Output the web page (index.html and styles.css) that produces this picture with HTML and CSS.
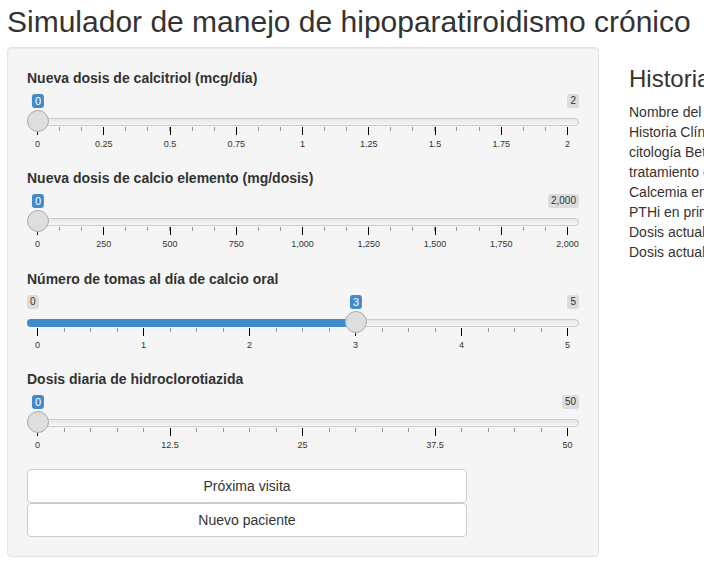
FILE: index.html
```html
<!DOCTYPE html>
<html lang="es">
<head>
<meta charset="utf-8">
<title>Simulador de manejo de hipoparatiroidismo crónico</title>
<link rel="stylesheet" href="styles.css">
</head>
<body>
<div class="page">
  <h2 class="title">Simulador de manejo de hipoparatiroidismo crónico</h2>
  <div class="layout">
    <div class="sidebar">
      <div class="form-group">
        <label class="control-label">Nueva dosis de calcitriol (mcg/día)</label>
        <div class="irs" style="--p: 0">
          <div class="irs-labels">
            <span class="irs-min is-hidden">0</span>
            <span class="irs-max">2</span>
            <span class="irs-single">0</span>
          </div>
          <div class="irs-track">
            <div class="irs-line"></div>
            <div class="irs-handle"></div>
          </div>
          <div class="irs-grid">
            <div class="irs-ticks">
              <div class="irs-pols small"><span></span><span></span><span></span><span></span><span></span><span></span><span></span><span></span><span></span><span></span><span></span><span></span><span></span><span></span><span></span><span></span><span></span><span></span><span></span><span></span><span></span><span></span><span></span><span></span><span></span></div>
              <div class="irs-pols"><span></span><span></span><span></span><span></span><span></span><span></span><span></span><span></span><span></span></div>
            </div>
            <div class="irs-grid-text"><span>0</span><span>0.25</span><span>0.5</span><span>0.75</span><span>1</span><span>1.25</span><span>1.5</span><span>1.75</span><span>2</span></div>
          </div>
        </div>
      </div>

      <div class="form-group">
        <label class="control-label">Nueva dosis de calcio elemento (mg/dosis)</label>
        <div class="irs" style="--p: 0">
          <div class="irs-labels">
            <span class="irs-min is-hidden">0</span>
            <span class="irs-max">2,000</span>
            <span class="irs-single">0</span>
          </div>
          <div class="irs-track">
            <div class="irs-line"></div>
            <div class="irs-handle"></div>
          </div>
          <div class="irs-grid">
            <div class="irs-ticks">
              <div class="irs-pols small"><span></span><span></span><span></span><span></span><span></span><span></span><span></span><span></span><span></span><span></span><span></span><span></span><span></span><span></span><span></span><span></span><span></span><span></span><span></span><span></span><span></span><span></span><span></span><span></span><span></span></div>
              <div class="irs-pols"><span></span><span></span><span></span><span></span><span></span><span></span><span></span><span></span><span></span></div>
            </div>
            <div class="irs-grid-text"><span>0</span><span>250</span><span>500</span><span>750</span><span>1,000</span><span>1,250</span><span>1,500</span><span>1,750</span><span>2,000</span></div>
          </div>
        </div>
      </div>

      <div class="form-group">
        <label class="control-label">Número de tomas al día de calcio oral</label>
        <div class="irs" style="--p: 0.6">
          <div class="irs-labels">
            <span class="irs-min">0</span>
            <span class="irs-max">5</span>
            <span class="irs-single">3</span>
          </div>
          <div class="irs-track">
            <div class="irs-line"></div>
            <div class="irs-bar"></div>
            <div class="irs-handle"></div>
          </div>
          <div class="irs-grid">
            <div class="irs-ticks">
              <div class="irs-pols small"><span></span><span></span><span></span><span></span><span></span><span></span><span></span><span></span><span></span><span></span><span></span><span></span><span></span><span></span><span></span><span></span><span></span><span></span><span></span><span></span><span></span></div>
              <div class="irs-pols"><span></span><span></span><span></span><span></span><span></span><span></span></div>
            </div>
            <div class="irs-grid-text"><span>0</span><span>1</span><span>2</span><span>3</span><span>4</span><span>5</span></div>
          </div>
        </div>
      </div>

      <div class="form-group">
        <label class="control-label">Dosis diaria de hidroclorotiazida</label>
        <div class="irs" style="--p: 0">
          <div class="irs-labels">
            <span class="irs-min is-hidden">0</span>
            <span class="irs-max">50</span>
            <span class="irs-single">0</span>
          </div>
          <div class="irs-track">
            <div class="irs-line"></div>
            <div class="irs-handle"></div>
          </div>
          <div class="irs-grid">
            <div class="irs-ticks">
              <div class="irs-pols small"><span></span><span></span><span></span><span></span><span></span><span></span><span></span><span></span><span></span><span></span><span></span><span></span><span></span><span></span><span></span><span></span><span></span><span></span><span></span><span></span><span></span></div>
              <div class="irs-pols"><span></span><span></span><span></span><span></span><span></span></div>
            </div>
            <div class="irs-grid-text"><span>0</span><span>12.5</span><span>25</span><span>37.5</span><span>50</span></div>
          </div>
        </div>
      </div>

      <div class="actions">
        <button class="btn" type="button">Próxima visita</button>
        <button class="btn" type="button">Nuevo paciente</button>
      </div>
    </div>

    <div class="main">
      <h3 class="section-title">Historia clínica</h3>
      <p class="history">
        <span>Nombre del paciente: María José Fernández</span>
        <span>Historia Clínica: mujer de 52 años con tiroidectomía total por</span>
        <span>citología Bethesda VI. Hipoparatiroidismo postquirúrgico en</span>
        <span>tratamiento con calcitriol y carbonato cálcico.</span>
        <span>Calcemia en la visita actual: 7.2 mg/dL</span>
        <span>PTHi en primera visita: 8 pg/mL</span>
        <span>Dosis actual de calcitriol: 0 mcg/día</span>
        <span>Dosis actual de calcio elemento: 0 mg/día</span>
      </p>
    </div>
  </div>
</div>
</body>
</html>
```

FILE: styles.css
```css
* {
  box-sizing: border-box;
}

html,
body {
  margin: 0;
  padding: 0;
}

body {
  width: 704px;
  height: 563px;
  overflow: hidden;
  font-family: "Liberation Sans", Arial, Helvetica, sans-serif;
  font-size: 14px;
  line-height: 1.42857143;
  color: #333;
  background: #fff;
}

.page {
  padding-left: 7px;
}

.title {
  margin: 5px 0 9px 0;
  font-size: 30px;
  font-weight: 500;
  line-height: 1.1;
  white-space: nowrap;
}

.layout {
  display: flex;
  align-items: flex-start;
}

.sidebar {
  flex: 0 0 592px;
  padding: 20px 19px 19px;
  background: #f5f5f5;
  border: 1px solid #e3e3e3;
  border-radius: 4px;
  box-shadow: inset 0 1px 1px rgba(0, 0, 0, 0.05);
}

.form-group {
  margin-bottom: 15.3px;
}

.control-label {
  display: inline-block;
  margin-bottom: 5px;
  font-weight: bold;
}

/* ---- range slider ---- */
.irs {
  padding-bottom: 4px;
}

.irs-labels {
  position: relative;
  height: 17px;
  padding-top: 1px;
  display: flex;
  justify-content: space-between;
  align-items: flex-start;
}

.irs-min,
.irs-max {
  padding: 1px 3px;
  font-size: 10px;
  line-height: 12px;
  color: #333;
  background: rgba(0, 0, 0, 0.1);
  border-radius: 3px;
}

.is-hidden {
  visibility: hidden;
}

.irs-single {
  position: absolute;
  top: 1px;
  left: calc(var(--p) * (100% - 22px) + 11px);
  transform: translateX(-50%);
  padding: 1px 3px;
  font-size: 11px;
  line-height: 12px;
  color: #fff;
  background: #428bca;
  border-radius: 3px;
}

.irs-track {
  position: relative;
  height: 17px;
  padding-top: 8px;
}

.irs-line {
  height: 8px;
  background: linear-gradient(to bottom, #dedede -50%, #fff 150%);
  background-color: #ededed;
  border: 1px solid #ccc;
  border-radius: 8px;
}

.irs-bar {
  position: absolute;
  top: 8px;
  left: 0;
  height: 8px;
  width: calc(var(--p) * (100% - 22px) + 11px);
  background: #428bca;
  border-radius: 8px 0 0 8px;
}

.irs-handle {
  position: absolute;
  top: 0;
  left: calc(var(--p) * (100% - 22px));
  width: 22px;
  height: 22px;
  background: #dedede;
  border: 1px solid #ababab;
  border-radius: 50%;
  box-shadow: 1px 1px 3px rgba(255, 255, 255, 0.3);
}

.irs-grid {
  padding: 0 11px 0 10px;
}

.irs-ticks {
  display: grid;
  height: 8px;
}

.irs-pols {
  grid-area: 1 / 1;
  display: flex;
  justify-content: space-between;
  align-items: flex-start;
}

.irs-pols span {
  width: 1px;
  height: 8px;
  background: #000;
}

.irs-pols.small span {
  height: 4px;
  background: #999;
}

.irs-grid-text {
  margin-top: 5px;
  height: 9px;
  display: flex;
  justify-content: space-between;
}

.irs-grid-text span {
  width: 1px;
  display: flex;
  justify-content: center;
  white-space: nowrap;
  font-size: 9px;
  line-height: 9px;
  color: #333;
}

/* ---- buttons ---- */
.actions {
  margin-top: 1.5px;
}

.btn {
  display: block;
  width: 440px;
  padding: 6px 12px;
  font-family: inherit;
  font-size: 14px;
  line-height: 1.42857143;
  color: #333;
  text-align: center;
  background: #fff;
  border: 1px solid #ccc;
  border-radius: 4px;
}

/* ---- main column ---- */
.main {
  flex: 0 0 600px;
  margin-left: 30px;
}

.section-title {
  margin: 19px 0 10px;
  font-size: 24px;
  font-weight: 500;
  line-height: 1.1;
  white-space: nowrap;
}

.history {
  margin: 0;
}

.history span {
  display: block;
  white-space: nowrap;
}
```
